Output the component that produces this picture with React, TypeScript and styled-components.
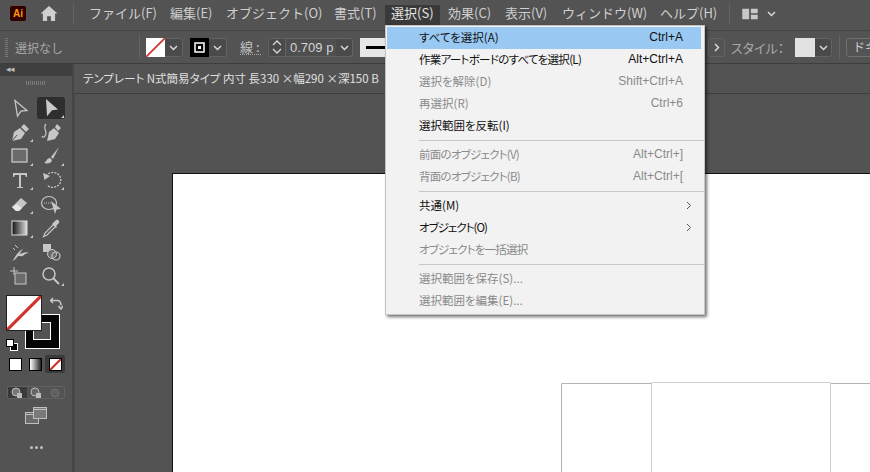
import React from "react";
import styled, { createGlobalStyle } from "styled-components";

const Global = createGlobalStyle`
  html, body { margin: 0; padding: 0; width: 870px; height: 472px; overflow: hidden; background: #535353; }
  * { box-sizing: border-box; }
`;
const FONT = `"Noto Sans CJK JP", "Liberation Sans", sans-serif`;
const Page = styled.div`
  position: relative; width: 870px; height: 472px; overflow: hidden; display: flex; flex-direction: column;
  background: #535353; font-family: ${FONT}; color: #d6d6d6; font-size: 13px;
`;
const MenuBar = styled.div`
  height: 31px; flex: none; display: flex; align-items: center; background: #535353; padding-bottom: 3px;
  border-bottom: 1px solid #444;
`;
const AppLogo = styled.div`
  width: 16px; height: 15px; margin: 0 14px 0 10px; background: #330000; border-radius: 2px; color: #ff9a00;
  font: bold 10px "Liberation Sans", sans-serif; display: flex; align-items: center; justify-content: center;
`;
const Divider = styled.div<{ $h: number; $ml: number; $mr: number }>`
  width: 1px; height: ${p => p.$h}px; background: #656565; flex: none;
  margin-left: ${p => p.$ml}px; margin-right: ${p => p.$mr}px;
`;
const MenuItem = styled.div<{ $w: number; $active?: boolean }>`
  width: ${p => p.$w}px; flex: none; height: 20px; padding-left: 6px; line-height: ${p => (p.$active ? 16 : 18)}px;
  white-space: nowrap; color: ${p => (p.$active ? "#e2e2e2" : "#cfcfcf")};
  background: ${p => (p.$active ? "#3a3a3a" : "transparent")};
  margin-right: ${p => (p.$active ? "2px" : "0")};
  transform: ${p => (p.$active ? "translateY(1px)" : "none")};
`;
const ControlBar = styled.div`
  height: 33px; flex: none; display: flex; align-items: center; background: #535353; border-bottom: 1px solid #3e3e3e;
`;
const Grip = styled.div`
  width: 3px; height: 19px; margin: 0 7px 0 5px; flex: none;
  background: repeating-linear-gradient(to bottom, #777 0 1px, transparent 1px 2px);
`;
const StatusLabel = styled.div`
  width: 124px; flex: none; color: #a8a8a8; font-size: 12px;
`;
const Swatch = styled.div<{ $w?: number; $bg: string }>`
  width: ${p => p.$w ?? 19}px; height: 19px; flex: none; background: ${p => p.$bg}; display: flex;
`;
const DropButton = styled.div<{ $w: number; $mr: number }>`
  width: ${p => p.$w}px; height: 19px; flex: none; margin-right: ${p => p.$mr}px; display: flex; align-items: center; justify-content: center;
  border: 1px solid #626262; border-left: none; border-radius: 0 3px 3px 0; background: #4a4a4a;
`;
const StrokeLabel = styled.div`
  width: 21px; flex: none; margin-right: 7px; font-size: 13px; color: #c4c4c4; line-height: 15px; border-bottom: 1px dotted #aaa; white-space: nowrap;
`;
const Spinner = styled.div`
  width: 18px; height: 19px; flex: none; border: 1px solid #626262; border-radius: 3px 0 0 3px; background: #4a4a4a;
  display: flex; align-items: center; justify-content: center;
`;
const WeightField = styled.div`
  width: 50px; height: 19px; flex: none; background: #4f4f4f; border-top: 1px solid #626262; border-bottom: 1px solid #626262;
  font: 13px/17px "Liberation Sans", sans-serif; color: #d4d4d4; padding-left: 4px; overflow: hidden; white-space: nowrap;
`;
const LinePreview = styled.div`
  width: 50px; height: 19px; flex: none; background: #e6e6e6; display: flex; align-items: center; padding-left: 6px;
`;
const LineSample = styled.div`
  width: 40px; height: 3px; background: #000;
`;
const Spacer = styled.div<{ $w: number }>`
  width: ${p => p.$w}px; flex: none;
`;
const SquareButton = styled.div`
  width: 17px; height: 19px; flex: none; border: 1px solid #626262; border-radius: 3px; display: flex; align-items: center; justify-content: center;
  margin-right: 6px;
`;
const StyleLabel = styled.div`
  width: 64px; flex: none; color: #a8a8a8; font-size: 13px; white-space: nowrap; font-feature-settings: "palt";
`;
const DocButton = styled.div`
  width: 40px; height: 19px; flex: none; border: 1px solid #707070; border-radius: 3px; color: #d0d0d0; font-size: 12px; line-height: 16px;
  padding-left: 6px; white-space: nowrap; overflow: hidden;
`;
const Body = styled.div`
  flex: 1; min-height: 0; display: flex;
`;
const ToolPanel = styled.div`
  width: 74px; flex: none; display: flex; flex-direction: column; background: #535353;
  border-right: 2px solid #454545;
`;
const PanelHeader = styled.div`
  height: 12px; flex: none; background: #3f3f3f; color: #bcbcbc; font: 9px/10px "Liberation Sans", sans-serif; padding-left: 6px; letter-spacing: -1px;
`;
const PanelGrip = styled.div`
  width: 19px; height: 4px; margin: 5px 0 0 26px; flex: none;
  background: repeating-linear-gradient(to right, #7a7a7a 0 1px, transparent 1px 2px);
`;
const ToolGrid = styled.div`
  display: grid; grid-template-columns: 28px 28px; grid-auto-rows: 24px; column-gap: 3px; margin: 12px 0 0 6px;
`;
const ToolCell = styled.div<{ $active?: boolean }>`
  position: relative; width: 28px; height: 22px; display: flex; align-items: center; justify-content: center; border-radius: 3px;
  background: ${p => (p.$active ? "#2e2e2e" : "transparent")};
`;
const Corner = styled.span`
  position: absolute; right: 1px; bottom: 1px; width: 0; height: 0; border-style: solid; border-width: 0 0 3px 3px;
  border-color: transparent transparent #c8c8c8 transparent;
`;
const ColorArea = styled.div`
  position: relative; height: 54px; flex: none; margin-top: 6px;
`;
const FillBox = styled.div`
  position: absolute; left: 6px; top: 0; width: 36px; height: 36px; background: #fff; border: 1px solid #222; z-index: 1; display: flex;
`;
const StrokeBox = styled.div`
  position: absolute; left: 25px; top: 19px; width: 35px; height: 35px; background: #050505; border: 1px solid #fff;
  display: flex; justify-content: flex-end; align-items: flex-end; padding: 0 8px 8px 0;
`;
const StrokeHole = styled.div`
  width: 18px; height: 18px; background: #535353; border: 1px solid #fff;
`;
const SwapIcon = styled.div`
  position: absolute; left: 50px; top: 0; width: 13px; height: 13px;
`;
const DefaultIcon = styled.div`
  position: absolute; left: 6px; top: 41px; width: 12px; height: 12px;
`;
const ColorRow = styled.div`
  display: flex; align-items: center; margin: 6px 0 0 5px; height: 18px;
`;
const ColorCell = styled.div<{ $active?: boolean }>`
  width: 20px; height: 18px; display: flex; align-items: center; justify-content: center; border-radius: 2px;
  background: ${p => (p.$active ? "#3a3a3a" : "transparent")};
`;
const ColorChip = styled.div<{ $bg: string }>`
  width: 13px; height: 13px; border: 1px solid #000; background: ${p => p.$bg}; display: flex;
`;
const DrawRow = styled.div`
  display: flex; height: 13px; width: 58px; margin: 13px 0 0 7px; border: 1px solid #626262; border-radius: 2px; flex: none;
`;
const DrawCell = styled.div<{ $active?: boolean }>`
  flex: 1; display: flex; align-items: center; justify-content: center; background: ${p => (p.$active ? "#3a3a3a" : "transparent")};
`;
const ScreenIcon = styled.div`
  margin: 7px 0 0 25px; width: 23px; height: 18px; flex: none;
`;
const Dots = styled.div`
  display: flex; gap: 2px; margin: 22px 0 0 30px;
`;
const Dot = styled.div`
  width: 3px; height: 3px; border-radius: 50%; background: #c0c0c0;
`;
const Workspace = styled.div`
  flex: 1; min-width: 0; display: flex; flex-direction: column;
`;
const DocTab = styled.div`
  height: 30px; flex: none; padding-left: 9px; line-height: 28px; color: #e0e0e0; font-size: 11.5px; white-space: nowrap;
  border-bottom: 1px solid #3e3e3e; font-feature-settings: "palt"; overflow: hidden;
`;
const Canvas = styled.div`
  flex: 1; min-height: 0; background: #535353; padding: 79px 0 0 97px; display: flex; border-left: 1px solid #4a4a4a;
`;
const Artboard = styled.div`
  position: relative; flex: 1; background: #fff; border-top: 1px solid #111; border-left: 1px solid #111;
`;
const DieLine = styled.svg`
  position: absolute; left: 0; top: 0;
`;
const Menu = styled.div`
  position: absolute; left: 385px; top: 25px; width: 320px; height: 290px; background: #f2f2f2; border: 1px solid #c4c4c4;
  padding: 1px; box-shadow: 2px 2px 3px rgba(0, 0, 0, 0.55); z-index: 5; font-size: 11.5px; color: #111;
  font-feature-settings: "palt";
`;
const Row = styled.div<{ $hi?: boolean; $off?: boolean; $sub?: boolean }>`
  height: 22px; display: flex; align-items: center; justify-content: space-between; padding: 0 ${p => (p.$sub ? 8 : 18)}px 2px 32px; white-space: nowrap;
  background: ${p => (p.$hi ? "#99c8f3" : "transparent")};
  color: ${p => (p.$off ? "#8a8a8a" : "#111")}; width: 314px;
`;
const RowLabel = styled.span<{ $ls?: number }>`
  letter-spacing: ${p => p.$ls ?? 0}px;
`;
const Shortcut = styled.span`
  font-family: "Liberation Sans", sans-serif; font-size: 12px;
`;
const Separator = styled.div`
  height: 1px; margin: 3px 0 3px 32px; width: 286px; background: #c8c8c8;
`;

const G = "#c6c6c6";
const Chev = ({ d = "down", c = "#d8d8d8" }: { d?: string; c?: string }) => (
  <svg width="9" height="9" viewBox="0 0 9 9" fill="none" stroke={c} strokeWidth="1.5">
    <path d={d === "down" ? "M1 3l3.5 3.5L8 3" : "M3 1l3.5 3.5L3 8"} />
  </svg>
);
const SubArrow = () => (
  <svg width="8" height="9" viewBox="0 0 8 9" fill="none" stroke="#555" strokeWidth="1"><path d="M2 1l3.500 3.500L2 8" /></svg>
);
const Slash = ({ w = 1.8 }: { w?: number }) => (
  <svg width="100%" height="100%" viewBox="0 0 20 20" preserveAspectRatio="none">
    <path d="M0 20L20 0" stroke="#d0322c" strokeWidth={w} />
  </svg>
);
const Ico = ({ children }: { children: React.ReactNode }) => (
  <svg width="22" height="22" viewBox="0 0 22 22" fill="none">{children}</svg>
);
const tools: { n: React.ReactNode; a?: boolean; c?: boolean }[] = [
  { n: <Ico><path d="M6 3.500l12 10-6 .6-3.500 5z" stroke={G} strokeWidth="1.300" /></Ico> },
  { n: <Ico><path d="M6 2l12 10.500-6 .8-5 6z" fill="#c9c9c9" /></Ico>, a: true, c: true },
  { n: <Ico><path d="M3 20l2-9 6-4 5 5-4 6z" fill={G} /><path d="M12 6l3-3 5 5-3 3z" fill={G} /><path d="M3 20l5-6" stroke="#535353" /></Ico>, c: true },
  { n: <Ico><path d="M7 20l2-9 5-4 5 5-4 6z" fill={G} /><path d="M15 6l2-3 4 4-3 3z" fill={G} /><path d="M6 3c-3 3 0 6 0 9s-3 6-4 3" stroke={G} strokeWidth="1.200" /></Ico> },
  { n: <Ico><rect x="3" y="4" width="15" height="13" fill="#6b6b6b" stroke={G} strokeWidth="1.300" /></Ico>, c: true },
  { n: <Ico><path d="M19 2l-8 10 2 2z" fill={G} /><path d="M10 13c-3 0-3 3-6 5 4 1 8 0 8-3z" fill={G} /></Ico>, c: true },
  { n: <Ico><path d="M4 4h14v4h-1l-1-2h-4v12h2v1H8v-1h2V6H6L5 8H4z" fill={G} /></Ico>, c: true },
  { n: <Ico><path d="M6 7a8 7.500 0 1 1 1 9" stroke={G} strokeWidth="1.300" strokeDasharray="2 1.200" /><path d="M3 4l1.500 7L10 7z" fill={G} /></Ico>, c: true },
  { n: <Ico><path d="M3 14l9-9 6 5-8 8H7z" fill={G} /><path d="M3 14l4 4h3l3-3-5-4z" fill="#e6e6e6" /></Ico>, c: true },
  { n: <Ico><ellipse cx="9" cy="10" rx="7.500" ry="6.500" stroke={G} strokeWidth="1.200" /><path d="M4 10h8" stroke={G} strokeDasharray="1 1" /><path d="M11 8l10 8-4.500.5-1.500 4.500z" fill={G} /></Ico> },
  { n: <Ico><defs><linearGradient id="gr"><stop offset="0" stopColor="#111" /><stop offset="1" stopColor="#ddd" /></linearGradient></defs><rect x="3" y="4" width="15" height="14" fill="url(#gr)" stroke="#ddd" /></Ico>, c: true },
  { n: <Ico><path d="M14 7l-9 9-1.500 3.500L7 18l9-9" stroke={G} strokeWidth="1.200" /><path d="M13 6l1-1 2-2c2-1 4 1 3 3l-3 3 1 1-1 1-4-4z" fill={G} /></Ico> },
  { n: <Ico><path d="M2 20c3 0 4-5 6-7s3-4 6-5c-1 2-3 3-3 5 2-1 6-3 9-1-2 0-5 1-6 3-2 1-4-1-6 1 0 1-3 4-6 4z" fill={G} /><path d="M6 4l3 3M4 7l2 2" stroke={G} /></Ico> },
  { n: <Ico><rect x="3" y="3" width="8" height="8" fill={G} /><circle cx="12" cy="13" r="4.500" fill="#6b6b6b" stroke={G} /><circle cx="16" cy="15" r="4" stroke={G} strokeWidth="1.200" /></Ico> },
  { n: <Ico><rect x="6" y="8" width="11" height="11" fill="#6b6b6b" stroke={G} /><path d="M1 6h8M5 2v8" stroke={G} /></Ico> },
  { n: <Ico><circle cx="9" cy="9" r="6" stroke={G} strokeWidth="1.500" /><path d="M13 13l6 6" stroke={G} strokeWidth="2" /></Ico>, c: true },
];

const menus = [
  { t: "ファイル(F)", w: 81 }, { t: "編集(E)", w: 56 }, { t: "オブジェクト(O)", w: 108 }, { t: "書式(T)", w: 57 },
  { t: "選択(S)", w: 55, a: true }, { t: "効果(C)", w: 57 }, { t: "表示(V)", w: 57 }, { t: "ウィンドウ(W)", w: 98 }, { t: "ヘルプ(H)", w: 63 },
];
type Item = { t: string; s?: string; off?: boolean; hi?: boolean; sub?: boolean; ls?: number } | "sep";
const items: Item[] = [
  { t: "すべてを選択(A)", s: "Ctrl+A", hi: true },
  { t: "作業アートボードのすべてを選択(L)", s: "Alt+Ctrl+A", ls: -0.7 },
  { t: "選択を解除(D)", s: "Shift+Ctrl+A", off: true },
  { t: "再選択(R)", s: "Ctrl+6", off: true },
  { t: "選択範囲を反転(I)" },
  "sep",
  { t: "前面のオブジェクト(V)", s: "Alt+Ctrl+]", off: true, ls: -0.75 },
  { t: "背面のオブジェクト(B)", s: "Alt+Ctrl+[", off: true, ls: -0.75 },
  "sep",
  { t: "共通(M)", sub: true },
  { t: "オブジェクト(O)", sub: true, ls: -1 },
  { t: "オブジェクトを一括選択", off: true, ls: -0.8 },
  "sep",
  { t: "選択範囲を保存(S)...", off: true },
  { t: "選択範囲を編集(E)...", off: true },
];

export default function App() {
  return (
    <Page>
      <Global />
      <MenuBar>
        <AppLogo>Ai</AppLogo>
        <svg width="18" height="15" viewBox="0 0 18 16"><path d="M9 0L0 8h2.500v8H7v-5h4v5h4.500V8H18z" fill="#cfcfcf" /></svg>
        <Divider $h={20} $ml={15} $mr={9} />
        {menus.map(m => <MenuItem key={m.t} $w={m.w} $active={m.a}>{m.t}</MenuItem>)}
        <Divider $h={20} $ml={12} $mr={11} />
        <svg width="18" height="12" viewBox="0 0 18 14"><path d="M0 1h8v12H0zM10 1h8v5h-8zM10 8h8v5h-8z" fill="#c8c8c8" /></svg>
        <Spacer $w={8} />
        <Chev />
      </MenuBar>
      <ControlBar>
        <Grip />
        <StatusLabel>選択なし</StatusLabel>
        <Divider $h={24} $ml={0} $mr={6} />
        <Swatch $bg="#fff"><Slash /></Swatch>
        <DropButton $w={18} $mr={7}><Chev /></DropButton>
        <Swatch $bg="#000">
          <svg width="19" height="19" viewBox="0 0 19 19"><rect x="5" y="5" width="9" height="9" fill="none" stroke="#fff" strokeWidth="1.500" /><rect x="8" y="8" width="3" height="3" fill="#fff" /></svg>
        </Swatch>
        <DropButton $w={18} $mr={13}><Chev /></DropButton>
        <StrokeLabel>線 :</StrokeLabel>
        <Spinner>
          <svg width="10" height="16" viewBox="0 0 10 16" fill="none" stroke="#d8d8d8" strokeWidth="1.300"><path d="M1 6l4-4 4 4M1 10l4 4 4-4" /></svg>
        </Spinner>
        <WeightField>0.709 p</WeightField>
        <DropButton $w={17} $mr={7}><Chev /></DropButton>
        <LinePreview><LineSample /></LinePreview>
        <Spacer $w={298} />
        <SquareButton><Chev d="right" /></SquareButton>
        <StyleLabel>スタイル：</StyleLabel>
        <Swatch $w={20} $bg="#e2e2e2" />
        <DropButton $w={17} $mr={7}><Chev /></DropButton>
        <Divider $h={24} $ml={0} $mr={6} />
        <DocButton>ドキュメント</DocButton>
      </ControlBar>
      <Body>
        <ToolPanel>
          <PanelHeader>◂◂</PanelHeader>
          <PanelGrip />
          <ToolGrid>
            {tools.map((t, i) => (
              <ToolCell key={i} $active={t.a}>{t.n}{t.c && <Corner />}</ToolCell>
            ))}
          </ToolGrid>
          <ColorArea>
            <FillBox><Slash /></FillBox>
            <StrokeBox><StrokeHole /></StrokeBox>
            <SwapIcon>
              <svg width="13" height="13" viewBox="0 0 13 13" fill="none" stroke="#c8c8c8" strokeWidth="1.500"><path d="M3 1L0.500 3.500 3 6M1 3.500h6c3 0 4 2 4 5M8.500 9l2.500 3 2-3" /></svg>
            </SwapIcon>
            <DefaultIcon>
              <svg width="12" height="12" viewBox="0 0 12 12"><rect x="4.500" y="4.500" width="7" height="7" fill="#000" stroke="#fff" /><rect x="0.500" y="0.500" width="7" height="7" fill="#fff" stroke="#000" /></svg>
            </DefaultIcon>
          </ColorArea>
          <ColorRow>
            <ColorCell><ColorChip $bg="#fff" /></ColorCell>
            <ColorCell><ColorChip $bg="linear-gradient(to right,#fff,#222)" /></ColorCell>
            <ColorCell $active><ColorChip $bg="#fff"><Slash w={4} /></ColorChip></ColorCell>
          </ColorRow>
          <DrawRow>
            <DrawCell $active>
              <svg width="12" height="12" viewBox="0 0 12 12"><circle cx="5" cy="5" r="4" fill="#777" stroke="#bbb" /><rect x="6" y="6" width="5" height="5" fill="#bbb" /></svg>
            </DrawCell>
            <DrawCell>
              <svg width="12" height="12" viewBox="0 0 12 12"><circle cx="5" cy="5" r="4" fill="#666" stroke="#bbb" /><path d="M6 11V6h5v5z" fill="#bbb" /></svg>
            </DrawCell>
            <DrawCell>
              <svg width="10" height="10" viewBox="0 0 10 10"><circle cx="5" cy="5" r="4" fill="#5f5f5f" stroke="#6f6f6f" /></svg>
            </DrawCell>
          </DrawRow>
          <ScreenIcon>
            <svg width="23" height="18" viewBox="0 0 23 18" fill="none" stroke="#c0c0c0"><rect x="0.500" y="6.500" width="13" height="11" fill="#6a6a6a" /><rect x="8.500" y="1.500" width="13" height="11" fill="#7a7a7a" /><path d="M8.500 3.500h13M0.500 8.500h8" /></svg>
          </ScreenIcon>
          <Dots><Dot /><Dot /><Dot /></Dots>
        </ToolPanel>
        <Workspace>
          <DocTab>テンプレート N式簡易タイプ 内寸 長330 ×幅290 ×深150 B</DocTab>
          <Canvas>
            <Artboard>
              <DieLine width="698" height="298" viewBox="0 0 698 298" fill="none">
                <path d="M388.500 298V209.500H478M657 209.500H698" stroke="#b4b4b4" />
                <path d="M478.500 298V208.500H657.500V298" stroke="#d0d0d0" />
              </DieLine>
            </Artboard>
          </Canvas>
        </Workspace>
      </Body>
      <Menu>
        {items.map((it, i) =>
          it === "sep" ? <Separator key={i} /> : (
            <Row key={i} $hi={it.hi} $off={it.off} $sub={it.sub}>
              <RowLabel $ls={it.ls}>{it.t}</RowLabel>
              {it.s && <Shortcut>{it.s}</Shortcut>}
              {it.sub && <SubArrow />}
            </Row>
          )
        )}
      </Menu>
    </Page>
  );
}
